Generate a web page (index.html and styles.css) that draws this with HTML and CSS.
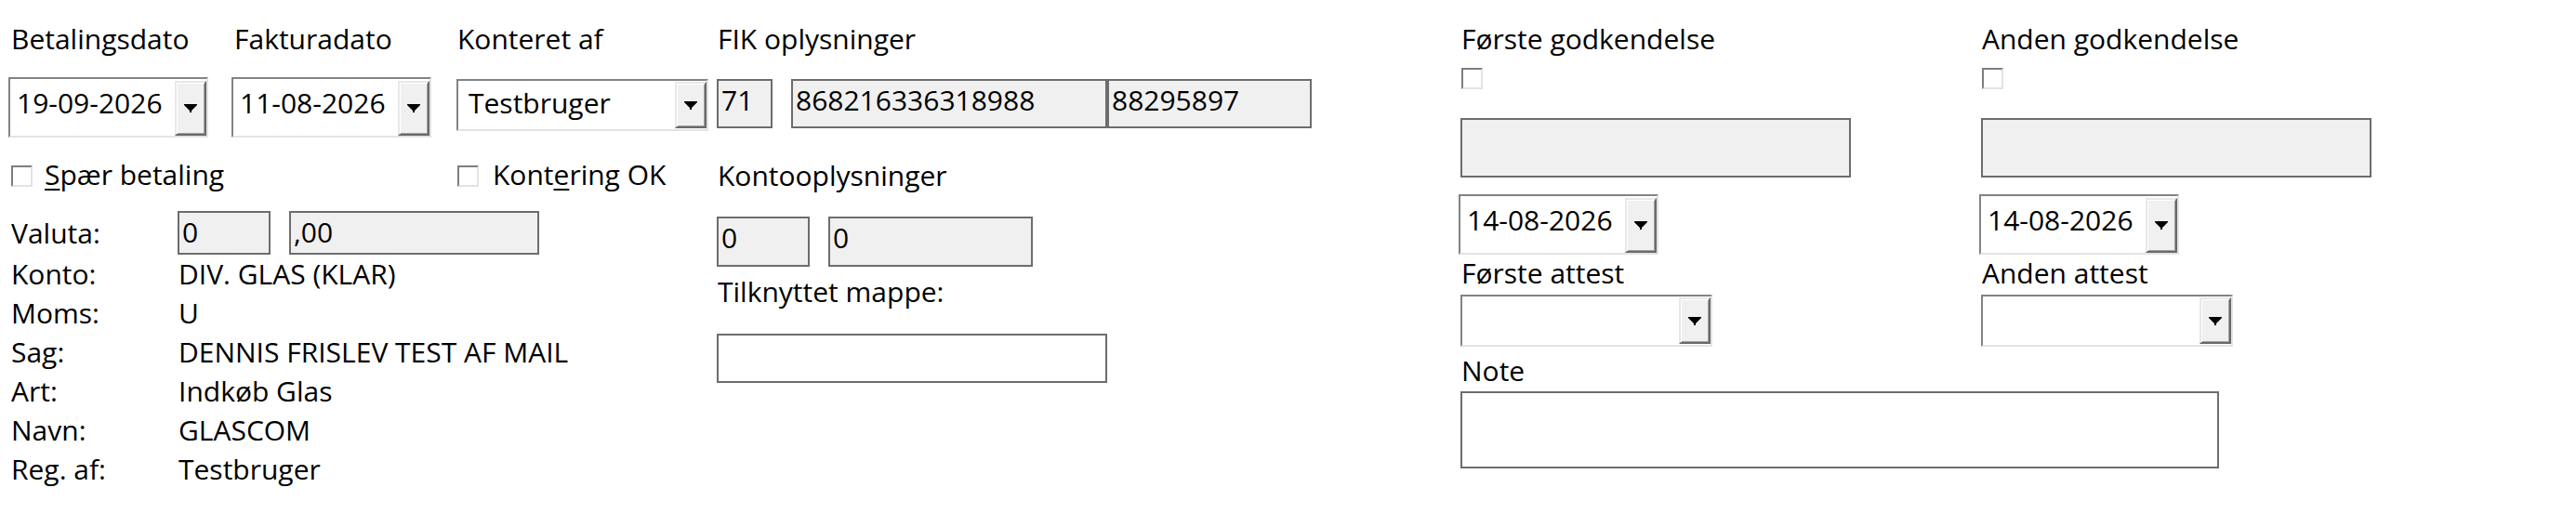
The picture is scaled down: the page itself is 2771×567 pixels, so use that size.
FILE: index.html
```html
<!DOCTYPE html>
<html lang="da">
<head>
<meta charset="utf-8">
<title>Betaling</title>
<link rel="stylesheet" href="styles.css">
</head>
<body>
<div class="form">
  <div class="left">
    <div class="top-grid">
      <div class="lbl">Betalingsdato</div>
      <div class="lbl">Fakturadato</div>
      <div class="lbl lbl-k">Konteret af</div>

      <div class="combo combo-date grid-date">
        <span class="ctext">19-09-2026</span>
        <span class="cbtn"><svg class="arrow" width="14" height="9" viewBox="0 0 14 9"><path d="M0 0H14V1L8 7V9H6V7L0 1Z"/></svg></span>
      </div>
      <div class="combo combo-date grid-date">
        <span class="ctext">11-08-2026</span>
        <span class="cbtn"><svg class="arrow" width="14" height="9" viewBox="0 0 14 9"><path d="M0 0H14V1L8 7V9H6V7L0 1Z"/></svg></span>
      </div>
      <div class="combo combo-sel grid-sel">
        <span class="ctext">Testbruger</span>
        <span class="cbtn"><svg class="arrow" width="14" height="9" viewBox="0 0 14 9"><path d="M0 0H14V1L8 7V9H6V7L0 1Z"/></svg></span>
      </div>

      <div class="chk-row chk-row-a">
        <span class="chk"></span><span><u>S</u>pær betaling</span>
      </div>
      <div class="chk-row chk-row-b">
        <span class="chk"></span><span>Kont<u>e</u>ring OK</span>
      </div>
    </div>

    <div class="valuta">
      <div class="valuta-lab">Valuta:</div>
      <div class="fld fld-v1">0</div>
      <div class="fld fld-v2">,00</div>
    </div>

    <div class="info">
      <div class="info-k">Konto:</div><div>DIV. GLAS (KLAR)</div>
      <div class="info-k">Moms:</div><div>U</div>
      <div class="info-k">Sag:</div><div>DENNIS FRISLEV TEST AF MAIL</div>
      <div class="info-k">Art:</div><div>Indkøb Glas</div>
      <div class="info-k">Navn:</div><div>GLASCOM</div>
      <div class="info-k">Reg. af:</div><div>Testbruger</div>
    </div>
  </div>

  <div class="fik">
    <div class="fik-title">FIK oplysninger</div>
    <div class="fields fik-fields">
      <div class="fld fld-f1">71</div>
      <div class="fld fld-f2">868216336318988</div>
      <div class="fld fld-f3">88295897</div>
    </div>
    <div class="fik-sub kl-label">Kontooplysninger</div>
    <div class="fields konto-fields">
      <div class="fld fld-k1">0</div>
      <div class="fld fld-k2">0</div>
    </div>
    <div class="fik-sub tm-label">Tilknyttet mappe:</div>
    <div class="fld fld-white tm-field"></div>
  </div>

  <div class="right">
    <div class="rgrid">
      <div class="rcol">
        <div class="rtitle">Første godkendelse</div>
        <span class="chk rchk"></span>
        <div class="fld rgray"></div>
        <div class="combo combo-date rdate">
          <span class="ctext">14-08-2026</span>
          <span class="cbtn"><svg class="arrow" width="14" height="9" viewBox="0 0 14 9"><path d="M0 0H14V1L8 7V9H6V7L0 1Z"/></svg></span>
        </div>
        <div class="rlabel">Første attest</div>
        <div class="combo combo-sel rattest">
          <span class="ctext"></span>
          <span class="cbtn"><svg class="arrow" width="14" height="9" viewBox="0 0 14 9"><path d="M0 0H14V1L8 7V9H6V7L0 1Z"/></svg></span>
        </div>
      </div>
      <div class="rcol">
        <div class="rtitle">Anden godkendelse</div>
        <span class="chk rchk"></span>
        <div class="fld rgray"></div>
        <div class="combo combo-date rdate">
          <span class="ctext">14-08-2026</span>
          <span class="cbtn"><svg class="arrow" width="14" height="9" viewBox="0 0 14 9"><path d="M0 0H14V1L8 7V9H6V7L0 1Z"/></svg></span>
        </div>
        <div class="rlabel">Anden attest</div>
        <div class="combo combo-sel rattest">
          <span class="ctext"></span>
          <span class="cbtn"><svg class="arrow" width="14" height="9" viewBox="0 0 14 9"><path d="M0 0H14V1L8 7V9H6V7L0 1Z"/></svg></span>
        </div>
      </div>
    </div>
    <div class="note-label">Note</div>
    <div class="fld fld-white note"></div>
  </div>
</div>
</body>
</html>
```

FILE: styles.css
```css
* { box-sizing: border-box; }

html, body { background: #ffffff; }

body {
  margin: 0;
  font-family: "Open Sans", "Noto Sans", sans-serif;
  font-size: 30px;
  line-height: 40px;
  color: #000000;
}

.form {
  display: flex;
  align-items: flex-start;
  width: 2771px;
  height: 567px;
  overflow: hidden;
}

/* ---------- left block ---------- */
.left {
  flex: none;
  width: 771px;
  padding-left: 9px;
}

.top-grid {
  display: grid;
  grid-template-columns: 240px 242px 280px;
  align-items: start;
  padding-top: 22px;
}

.lbl { padding-left: 3px; white-space: nowrap; }
.lbl-k { padding-left: 1px; }

/* combo boxes */
.combo {
  display: flex;
  background: #ffffff;
  border-style: solid;
  border-width: 2px;
  border-color: #838383 #e3e3e3 #e3e3e3 #838383;
}

.combo-date {
  width: 215px;
  height: 65px;
  padding-top: 2px;
}

.combo-sel {
  width: 271px;
  height: 56px;
  padding: 1px 0;
}

.ctext {
  flex: 1;
  min-width: 0;
  padding: 4px 0 0 7px;
  white-space: nowrap;
  overflow: hidden;
}

.combo-sel .ctext { padding: 3px 0 0 11px; }

.cbtn {
  flex: none;
  width: 34px;
  display: flex;
  align-items: center;
  justify-content: center;
  background: #f0f0f0;
  border-style: solid;
  border-width: 2px;
  border-color: #e8e8e8 #6a6a6a #6a6a6a #e8e8e8;
  box-shadow: inset 1px 1px 0 #ffffff, inset -1px -1px 0 #a0a0a0;
}

.arrow { display: block; fill: #000000; }

.grid-date { margin-top: 21px; }
.grid-sel { margin-top: 23px; }

/* checkboxes */
.chk {
  display: block;
  flex: none;
  width: 23px;
  height: 23px;
  background: #ffffff;
  border-style: solid;
  border-width: 2px;
  border-color: #7d7d7d #e3e3e3 #e3e3e3 #7d7d7d;
}

.chk-row {
  display: flex;
  align-items: center;
  gap: 13px;
  height: 40px;
  margin-top: 20px;
  white-space: nowrap;
}

.chk-row .chk { margin-top: 3px; }

.chk-row-a { grid-column: 1 / 3; padding-left: 3px; }
.chk-row-b { grid-column: 3; padding-left: 1px; gap: 15px; }

u {
  text-decoration-thickness: 2px;
  text-underline-offset: 4px;
}

/* text fields */
.fld {
  flex: none;
  border: 2px solid #6d6d6d;
  background: #f0f0f0;
  padding: 1px 3px 0;
  white-space: nowrap;
  overflow: hidden;
}

.fld-white { background: #ffffff; }

.valuta {
  display: flex;
  align-items: flex-start;
  margin-top: 19px;
}

.valuta-lab {
  width: 182px;
  padding-left: 3px;
  margin-top: 4px;
}

.fld-v1 { width: 100px; height: 47px; margin-right: 20px; }
.fld-v2 { width: 269px; height: 47px; }

.info {
  display: grid;
  grid-template-columns: 183px auto;
  line-height: 42px;
  white-space: nowrap;
}

.info-k { padding-left: 3px; }

/* ---------- FIK column ---------- */
.fik {
  flex: none;
  width: 640px;
  margin-right: 158px;
}

.fik-title { padding: 22px 0 0 1px; white-space: nowrap; }
.fik-sub { padding-left: 1px; white-space: nowrap; }

.fields { display: flex; }

.fik-fields { margin-top: 23px; }
.fld-f1 { width: 60px; height: 53px; margin-right: 20px; }
.fld-f2 { width: 340px; height: 53px; }
.fld-f3 { width: 220px; height: 53px; }

.kl-label { margin-top: 31px; }

.konto-fields { margin-top: 24px; }
.fld-k1 { width: 100px; height: 54px; margin-right: 20px; }
.fld-k2 { width: 220px; height: 54px; }

.tm-label { margin-top: 7px; }
.tm-field { margin-top: 25px; width: 420px; height: 53px; }

/* ---------- right block ---------- */
.right {
  flex: none;
  width: 1120px;
}

.rgrid {
  display: grid;
  grid-template-columns: 560px 560px;
}

.rcol {
  display: flex;
  flex-direction: column;
  align-items: flex-start;
}

.rtitle { padding: 22px 0 0 3px; white-space: nowrap; }

.rchk { margin: 11px 0 0 3px; }

.rgray { margin: 31px 0 0 2px; width: 420px; height: 64px; }

.rdate { margin-top: 18px; }

.rlabel { padding-left: 3px; white-space: nowrap; }

.rattest { margin: 3px 0 0 2px; }

.note-label { margin-top: 6px; padding-left: 3px; }

.note { margin: 2px 0 0 2px; width: 816px; height: 83px; }
```
